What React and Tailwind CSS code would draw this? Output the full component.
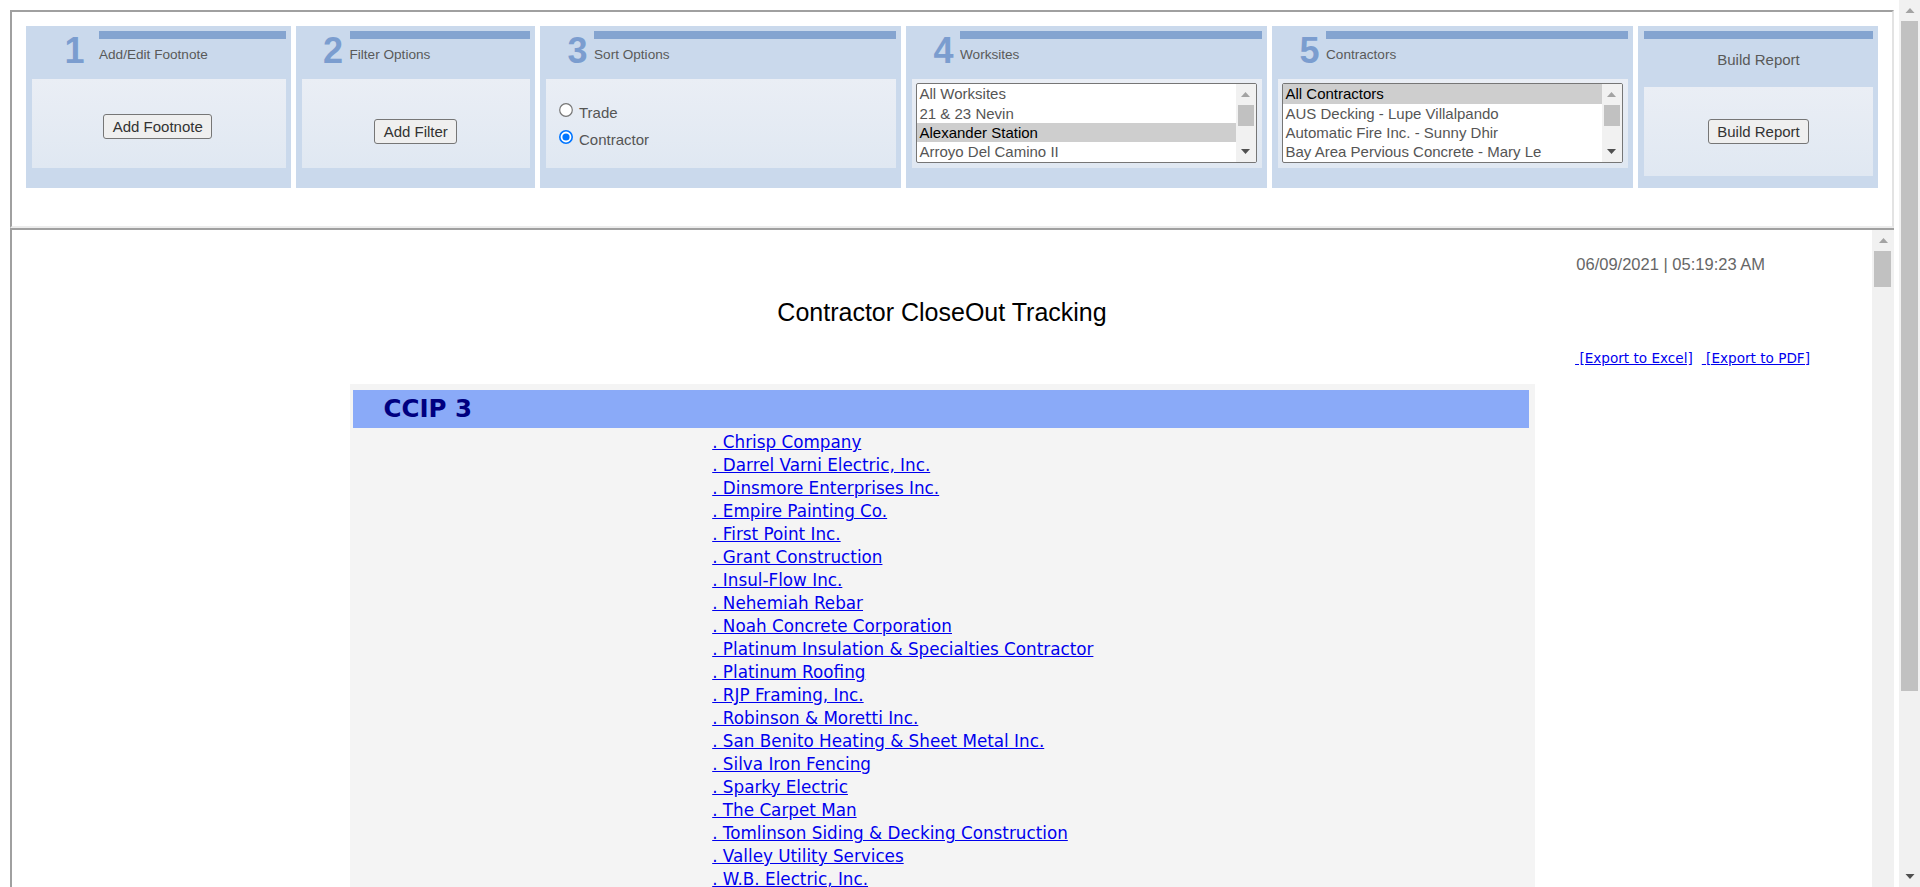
import React from "react";

const F_ARIAL = "font-['Liberation_Sans',Arial,sans-serif]";
const F_VERD = "font-['DejaVu_Sans',Verdana,sans-serif]";

function UpArrow({ color, w = 9, h = 5 }) {
  return (
    <svg width={w} height={h} viewBox="0 0 9 5">
      <path d="M4.5 0L9 5H0Z" fill={color} />
    </svg>
  );
}
function DownArrow({ color, w = 9, h = 5 }) {
  return (
    <svg width={w} height={h} viewBox="0 0 9 5">
      <path d="M0 0H9L4.5 5Z" fill={color} />
    </svg>
  );
}

function ListBox({ items, selected }) {
  return (
    <div className="ml-[3.5px] mt-[4.3px] w-[341px] h-[79.4px] border border-[#767676] rounded-[2px] bg-white flex overflow-hidden">
      <div className="flex-1 min-w-0">
        {items.map((it, i) => (
          <div
            key={i}
            className={
              i === selected
                ? "h-[19.35px] pl-[3px] text-[15px] leading-[19px] whitespace-nowrap overflow-hidden bg-[#cecece] text-black"
                : "h-[19.35px] pl-[3px] text-[15px] leading-[19px] whitespace-nowrap overflow-hidden text-[#555555]"
            }
          >
            {it}
          </div>
        ))}
      </div>
      <div className="w-[20px] bg-[#f1f1f1] flex flex-col">
        <div className="h-[21px] flex items-center justify-center">
          <UpArrow color="#a3a3a3" />
        </div>
        <div className="h-[20.7px] ml-[2.3px] w-[16.4px] bg-[#c1c1c1]" />
        <div className="flex-1" />
        <div className="h-[21px] flex items-center justify-center">
          <DownArrow color="#505050" />
        </div>
      </div>
    </div>
  );
}

function Btn({ children }) {
  return (
    <div className="h-[25px] px-[8.5px] border border-[#767676] rounded-[3px] bg-[#efefef] text-[15px] leading-[23px] text-[#333333] whitespace-nowrap">
      {children}
    </div>
  );
}

function Panel({ wCls, num, title, numCls, gapCls, children }) {
  return (
    <div className={`${wCls} shrink-0 h-[162px] bg-[#cad9ec] flex flex-col`}>
      <div className="h-[53px] flex">
        <div className={`${numCls} shrink-0 text-right pt-[6.5px] text-[36px] leading-[36px] font-bold text-[#7b9dcf]`}>
          {num}
        </div>
        <div className={`${gapCls} flex-1 pr-[5px] pt-[5px]`}>
          <div className="h-[8px] bg-[#84a4d0]" />
          <div className="mt-[8px] text-[13.6px] leading-[16px] text-[#595959] whitespace-nowrap">{title}</div>
        </div>
      </div>
      <div className="ml-[6px] mr-[5px] h-[88.7px] bg-linear-to-b from-[#eaeef5] to-[#e0e8f2]">{children}</div>
    </div>
  );
}

function Radio({ checked }) {
  return checked ? (
    <svg width="14" height="14" viewBox="0 0 14 14" className="shrink-0">
      <circle cx="7" cy="7" r="6.2" fill="white" stroke="#0075ff" strokeWidth="1.6" />
      <circle cx="7" cy="7" r="3.6" fill="#0075ff" />
    </svg>
  ) : (
    <svg width="14" height="14" viewBox="0 0 14 14" className="shrink-0">
      <circle cx="7" cy="7" r="6.3" fill="white" stroke="#767676" strokeWidth="1.2" />
    </svg>
  );
}

const contractors = [
  "Chrisp Company",
  "Darrel Varni Electric, Inc.",
  "Dinsmore Enterprises Inc.",
  "Empire Painting Co.",
  "First Point Inc.",
  "Grant Construction",
  "Insul-Flow Inc.",
  "Nehemiah Rebar",
  "Noah Concrete Corporation",
  "Platinum Insulation & Specialties Contractor",
  "Platinum Roofing",
  "RJP Framing, Inc.",
  "Robinson & Moretti Inc.",
  "San Benito Heating & Sheet Metal Inc.",
  "Silva Iron Fencing",
  "Sparky Electric",
  "The Carpet Man",
  "Tomlinson Siding & Decking Construction",
  "Valley Utility Services",
  "W.B. Electric, Inc.",
];

export default function App() {
  return (
    <div className={`${F_ARIAL} w-[1920px] h-[887px] overflow-hidden flex bg-white`}>
      <div className="w-[1899px] h-full shrink-0 pt-[10px] pl-[10px] pr-[5px] flex flex-col">
        {/* Top frame */}
        <div className="h-[218px] shrink-0 border-2 border-t-[#a0a0a0] border-l-[#a0a0a0] border-r-[#e3e3e3] border-b-[#ececec] pt-[14px] pl-[14px] bg-white">
          <div className="flex gap-[5px] items-start">
            <Panel wCls="w-[264.5px]" num="1" title="Add/Edit Footnote" numCls="w-[58.6px]" gapCls="ml-[14.4px]">
              <div className="pt-[35px] flex justify-center pr-[2px]">
                <Btn>Add Footnote</Btn>
              </div>
            </Panel>
            <Panel wCls="w-[239.5px]" num="2" title="Filter Options" numCls="w-[47.5px]" gapCls="ml-[6.5px]">
              <div className="pt-[40px] flex justify-center">
                <Btn>Add Filter</Btn>
              </div>
            </Panel>
            <Panel wCls="w-[361px]" num="3" title="Sort Options" numCls="w-[47.5px]" gapCls="ml-[6.5px]">
              <div className="pt-[23.7px] pl-[13px] text-[15px] text-[#555555]">
                <div className="h-[14px] flex items-center gap-[6px]">
                  <Radio />
                  <span className="pt-[5px] leading-[17px]">Trade</span>
                </div>
                <div className="mt-[13.3px] h-[14px] flex items-center gap-[6px]">
                  <Radio checked />
                  <span className="pt-[5px] leading-[17px]">Contractor</span>
                </div>
              </div>
            </Panel>
            <Panel wCls="w-[361px]" num="4" title="Worksites" numCls="w-[47.5px]" gapCls="ml-[6.5px]">
              <ListBox
                items={["All Worksites", "21 & 23 Nevin", "Alexander Station", "Arroyo Del Camino II"]}
                selected={2}
              />
            </Panel>
            <Panel wCls="w-[361px]" num="5" title="Contractors" numCls="w-[47.5px]" gapCls="ml-[6.5px]">
              <ListBox
                items={[
                  "All Contractors",
                  "AUS Decking - Lupe Villalpando",
                  "Automatic Fire Inc. - Sunny Dhir",
                  "Bay Area Pervious Concrete - Mary Le",
                ]}
                selected={0}
              />
            </Panel>
            <div className="w-[240px] shrink-0 h-[162px] bg-[#cad9ec] flex flex-col">
              <div className="h-[61px] pt-[5px] pl-[6px] pr-[5px]">
                <div className="h-[8px] bg-[#84a4d0]" />
                <div className="mt-[12px] text-center text-[15px] leading-[18px] text-[#595959]">Build Report</div>
              </div>
              <div className="ml-[6px] mr-[5px] h-[88.7px] bg-linear-to-b from-[#eaeef5] to-[#e0e8f2] pt-[32px] flex justify-center">
                <div>
                  <Btn>Build Report</Btn>
                </div>
              </div>
            </div>
          </div>
        </div>

        {/* Bottom frame */}
        <div className="flex-1 min-h-0 flex border-t-2 border-l-2 border-[#a0a0a0]">
          <div className="flex-1 min-w-0 overflow-hidden flex flex-col bg-white">
            <div className="pt-[24px] pr-[107px] text-right text-[16.5px] leading-[20px] text-[#666666]">
              06/09/2021 | 05:19:23 AM
            </div>
            <div className="mt-[23px] text-center text-[25px] leading-[30px] text-black">
              Contractor CloseOut Tracking
            </div>
            <div className={`${F_VERD} mt-[22.7px] pr-[62px] flex justify-end text-[13.6px] leading-[16px] whitespace-pre`}>
              <a href="#" className="underline text-[#0000ee]">{" [Export to Excel]"}</a>
              <span className="w-[9px]" />
              <a href="#" className="underline text-[#0000ee]">{" [Export to PDF]"}</a>
            </div>
            <div className="mt-[18.3px] mx-auto w-[1185px] shrink-0 bg-[#f4f4f4] pt-[6px] pl-[3px] pr-[6px]">
              <div className={`${F_VERD} h-[38px] bg-[#8aaaf8] flex items-center pl-[31px] text-[24.5px] font-bold text-[#000080]`}>
                CCIP 3
              </div>
              <div className={`${F_VERD} pt-[3px] pl-[359.7px] pb-[20px]`}>
                {contractors.map((c) => (
                  <div key={c} className="h-[23px] leading-[23px] whitespace-nowrap">
                    <a href="#" className="underline text-[#0000ee] text-[16.8px]">
                      {". " + c}
                    </a>
                  </div>
                ))}
              </div>
            </div>
          </div>
          <div className="w-[22px] shrink-0 bg-[#f1f1f1] flex flex-col">
            <div className="h-[21px] flex items-center justify-center">
              <UpArrow color="#a3a3a3" />
            </div>
            <div className="h-[36px] ml-[2px] w-[17px] bg-[#c1c1c1]" />
          </div>
        </div>
      </div>

      {/* Window scrollbar */}
      <div className="w-[21px] shrink-0 h-full bg-[#f1f1f1] flex flex-col">
        <div className="h-[20.7px] flex items-center justify-center">
          <UpArrow color="#a3a3a3" w={10} h={5} />
        </div>
        <div className="h-[670px] mx-[2px] bg-[#c1c1c1]" />
        <div className="flex-1" />
        <div className="h-[21px] flex items-center justify-center">
          <DownArrow color="#505050" w={10} h={5} />
        </div>
      </div>
    </div>
  );
}
